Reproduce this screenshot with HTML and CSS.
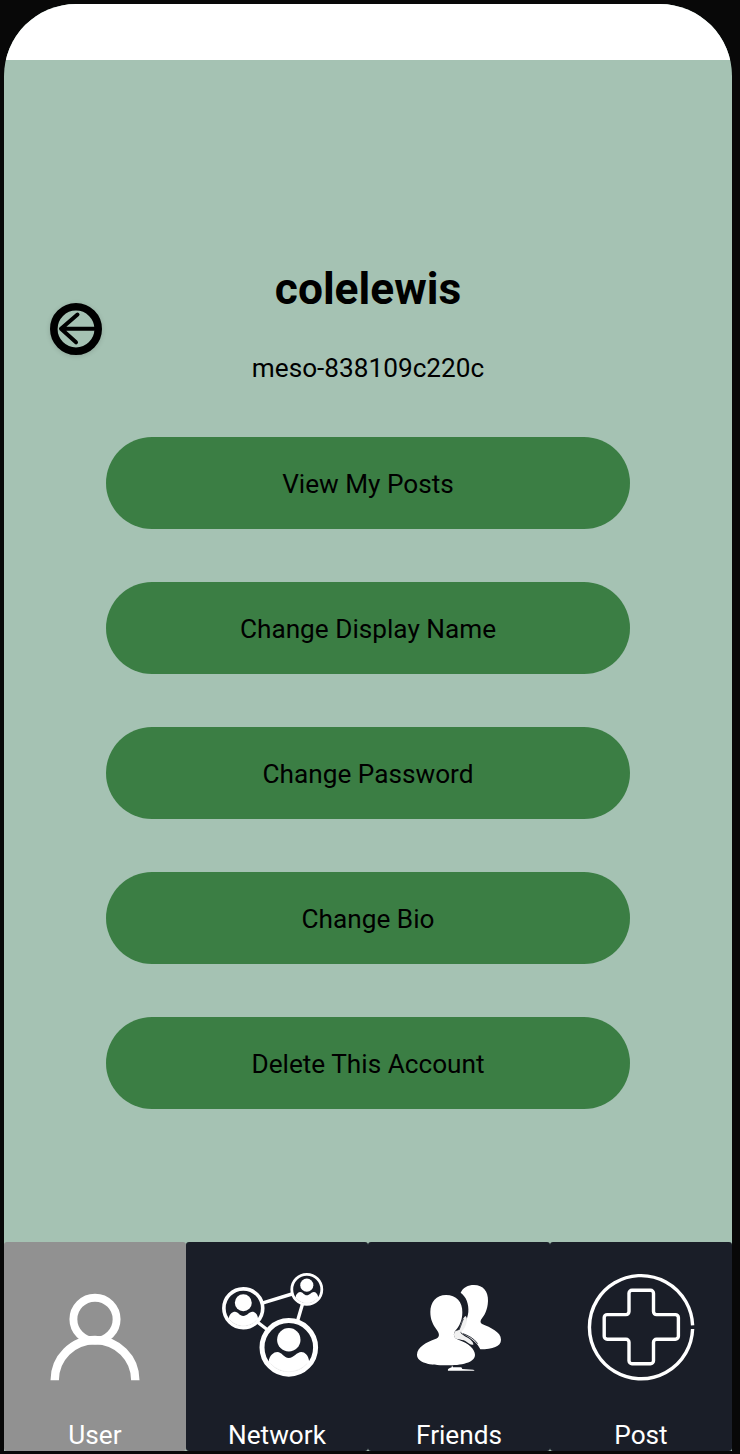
FILE: index.html
```html
<!DOCTYPE html>
<html lang="en">
<head>
<meta charset="utf-8">
<title>Account</title>
<link rel="stylesheet" href="styles.css">
</head>
<body>
<div class="screen">
  <header class="status-bar"></header>
  <main class="account">
    <button class="back" aria-label="Back">
      <svg width="52" height="52" viewBox="0 0 52 52" fill="none" stroke="#000">
        <circle cx="26" cy="26" r="22.2" stroke-width="7.6"/>
        <path d="M44 25.7H11M27.5 11.5L11 25.7L26 39.3" stroke-width="4" stroke-linecap="round" stroke-linejoin="round"/>
      </svg>
    </button>
    <h1 class="name">colelewis</h1>
    <p class="handle">meso-838109c220c</p>
    <div class="actions">
      <button class="action">View My Posts</button>
      <button class="action">Change Display Name</button>
      <button class="action">Change Password</button>
      <button class="action">Change Bio</button>
      <button class="action">Delete This Account</button>
    </div>
  </main>
  <nav class="tabs">
    <a class="tab tab-active">
      <svg class="icon" viewBox="0 0 182 170" fill="none" stroke="#fff">
        <circle cx="91" cy="77.3" r="21.6" stroke-width="7.9"/>
        <path d="M50.7 138.3a40.3 40.3 0 0 1 80.6 0" stroke-width="8.4"/>
      </svg>
      <span class="label">User</span>
    </a>
    <a class="tab">
      <svg class="icon" viewBox="0 0 182 170" fill="#fff">
        <path d="M77 60.8L106 52M116.5 62L111.5 79M72 80.5L83 89" stroke="#fff" stroke-width="3.4"/>
        <defs>
          <g id="member">
            <circle r="26.8" fill="none" stroke="#fff" stroke-width="5"/>
            <circle cy="-7.6" r="11.7"/>
            <path d="M-20.2 14.5C-19.5 8-15 4.7-11.5 4.7C-7 4.7-5 10.6 0 10.6C5 10.6 8 4.7 12.5 4.7C16 4.7 19.8 8 20.4 14.5A25 25 0 0 1-20.2 14.5Z"/>
            <path d="M-18 16.5A24.5 24.5 0 0 0 18 16.5" fill="none" stroke="#ddd" stroke-width=".4"/>
          </g>
        </defs>
        <use href="#member" transform="translate(57.3 66.3) scale(.725)"/>
        <use href="#member" transform="translate(120.8 47.4) scale(.56)"/>
        <use href="#member" transform="translate(102.8 105.4)"/>
      </svg>
      <span class="label">Network</span>
    </a>
    <a class="tab">
      <svg class="icon" viewBox="0 0 182 170" fill="#fff">
        <g transform="translate(42 33) scale(.33333)">
          <path d="M152 53C159 38 174 30 192 30C220 30 235 49 234 78C233 105 223 122 213 134C210 140 212 145 218 148C240 157 273 171 273 194C273 215 248 222 211 223C204 207 190 193 158 176L152 171C158 163 173 133 175 111C177 88 169 65 152 53Z"/>
          <path d="M108 60C139 60 158 81 157 112C157 137 148 154 137 166C127 179 132 190 145 194C176 204 195 223 195 239C195 263 155 271 108 271C60 271 21 263 21 239C21 217 50 201 76 192C88 187 91 179 80 164C69 149 61 134 61 111C61 81 79 60 108 60Z"/>
          <path d="M166 123C172 126 172 136 168 149C162 163 158 168 151 171C154 178 163 183 173 188C183 194 191 202 190 209C184 212 174 203 166 198C154 191 135 195 133 185C130 173 135 167 145 166C151 160 154 132 166 123Z" fill="#f1f1f1"/>
          <path d="M159 176C175 182 192 190 203 206M147 165C153 152 156 140 160 132" fill="none" stroke="#1a1e28" stroke-width="2.6"/>
          <path d="M126 271L129 277L154 277L157 282L190 284L194 287H114C112 281 121 279 125 277Z"/>
        </g>
      </svg>
      <span class="label">Friends</span>
    </a>
    <a class="tab">
      <svg class="icon" viewBox="0 0 182 170" fill="none" stroke="#fff" stroke-width="3.4">
        <path d="M142.6 83.4A51.6 51.6 0 1 0 142.6 87"/>
        <path d="M82 48.2H100.5a3 3 0 0 1 3 3V69.6a3 3 0 0 0 3 3H125.4a3 3 0 0 1 3 3V94.2a3 3 0 0 1-3 3H106.5a3 3 0 0 0-3 3V118.8a3 3 0 0 1-3 3H82a3 3 0 0 1-3-3V100.2a3 3 0 0 0-3-3H57.2a3 3 0 0 1-3-3V75.6a3 3 0 0 1 3-3H76a3 3 0 0 0 3-3V51.2a3 3 0 0 1 3-3Z"/>
      </svg>
      <span class="label">Post</span>
    </a>
  </nav>
</div>
</body>
</html>
```
FILE: styles.css
```css
* {
  box-sizing: border-box;
}

body {
  margin: 0;
  padding: 4px 8px 3px 4px;
  height: 1454px;
  background: #080808;
  font-family: Roboto, sans-serif;
}

.screen {
  display: flex;
  flex-direction: column;
  height: 1447px;
  overflow: hidden;
  border-radius: 72px 72px 0 0;
  background: #a5c2b3;
}

.status-bar {
  height: 56px;
  background: #fff;
}

.account {
  position: relative;
  flex: 1;
  display: flex;
  flex-direction: column;
  align-items: center;
  padding-top: 202px;
  color: #000;
}

/* Floats over the profile heading */
.back {
  position: absolute;
  left: 46px;
  top: 243px;
  width: 52px;
  height: 52px;
  padding: 0;
  border: 0;
  border-radius: 50%;
  background: none;
  box-shadow: 0 1px 5px rgba(0, 0, 0, .15);
}

.back svg {
  display: block;
}

.name {
  margin: 0;
  font-size: 44.3px;
  line-height: 54px;
  font-weight: 700;
}

.handle {
  margin: 36px 0 0;
  font-size: 26.2px;
  line-height: 32px;
}

.actions {
  display: flex;
  flex-direction: column;
  gap: 52.5px;
  margin-top: 52.5px;
}

.action {
  width: 524px;
  height: 92.5px;
  padding: 2px 0 0;
  border: 0;
  border-radius: 47px;
  background: #3b7e44;
  color: #000;
  font: 400 26.2px/32px Roboto, sans-serif;
}

.tabs {
  display: grid;
  grid-template-columns: repeat(4, 1fr);
  height: 209px;
}

.tab {
  display: flex;
  flex-direction: column;
  align-items: center;
  border-radius: 3px;
  background: #1a1e28;
  color: #fff;
}

.tab-active {
  background: #919191;
}

.icon {
  width: 182px;
  height: 170px;
}

.label {
  margin-top: 7px;
  font-size: 26.2px;
  line-height: 32px;
}
```
